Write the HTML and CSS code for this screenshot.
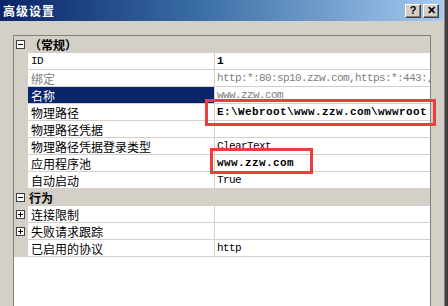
FILE: index.html
```html
<!DOCTYPE html>
<html>
<head>
    <meta charset="utf-8">
    <title>高级设置</title>
    <link rel="stylesheet" href="styles.css">
</head>
<body>
<div class="window">
    <div class="titlebar">
        <span class="title">高级设置</span>
        <div class="title-buttons">
            <span class="tbtn">?</span>
            <span class="tbtn">&#x2715;</span>
        </div>
    </div>

    <div class="content">
        <div class="grid">
            <div class="row cat">
                <span class="gutter"><i class="toggle minus"></i></span>
                <span class="cat-name">（常规）</span>
            </div>
            <div class="row">
                <span class="gutter"></span>
                <span class="name mono">ID</span>
                <span class="value bold">1</span>
            </div>
            <div class="row">
                <span class="gutter"></span>
                <span class="name grey">绑定</span>
                <span class="value grey">http:*:80:sp10.zzw.com,https:*:443:,</span>
            </div>
            <div class="row">
                <span class="gutter"></span>
                <span class="name selected">名称</span>
                <span class="value grey">www.zzw.com</span>
            </div>
            <div class="row">
                <span class="gutter"></span>
                <span class="name">物理路径</span>
                <span class="value bold">E:\Webroot\www.zzw.com\wwwroot</span>
            </div>
            <div class="row">
                <span class="gutter"></span>
                <span class="name">物理路径凭据</span>
                <span class="value"></span>
            </div>
            <div class="row">
                <span class="gutter"></span>
                <span class="name">物理路径凭据登录类型</span>
                <span class="value">ClearText</span>
            </div>
            <div class="row">
                <span class="gutter"></span>
                <span class="name">应用程序池</span>
                <span class="value bold">www.zzw.com</span>
            </div>
            <div class="row">
                <span class="gutter"></span>
                <span class="name">自动启动</span>
                <span class="value">True</span>
            </div>
            <div class="row cat">
                <span class="gutter"><i class="toggle minus"></i></span>
                <span class="cat-name">行为</span>
            </div>
            <div class="row">
                <span class="gutter"><i class="toggle plus"></i></span>
                <span class="name">连接限制</span>
                <span class="value"></span>
            </div>
            <div class="row">
                <span class="gutter"><i class="toggle plus"></i></span>
                <span class="name">失败请求跟踪</span>
                <span class="value"></span>
            </div>
            <div class="row">
                <span class="gutter"></span>
                <span class="name">已启用的协议</span>
                <span class="value">http</span>
            </div>
        </div>
    </div>

    <div class="mark mark-path"></div>
    <div class="mark mark-pool"></div>
</div>
</body>
</html>
```

FILE: styles.css
```css
body {
    margin: 0;
    font-family: "Noto Sans CJK SC", sans-serif;
    font-size: 12px;
    color: #000;
}

.window {
    position: relative;
    box-sizing: border-box;
    width: 448px;
    height: 306px;
    overflow: hidden;
    display: flex;
    flex-direction: column;
    background-color: #d4d0c8;
    border-right: 3px solid #404040;
    box-shadow: inset -1px 0 0 #808080;
}

.titlebar {
    height: 21px;
    margin-right: 2px;
    padding: 0 4px 0 3px;
    display: flex;
    align-items: center;
    justify-content: space-between;
    background: linear-gradient(to right, #0a246a, #3a6ea5 45%, #a6caf0);
}

.titlebar .title {
    color: #fff;
    font-weight: bold;
    font-size: 12px;
    letter-spacing: 1px;
}

.title-buttons {
    display: flex;
    gap: 2px;
}

.tbtn {
    box-sizing: border-box;
    width: 16px;
    height: 14px;
    display: flex;
    align-items: center;
    justify-content: center;
    background-color: #d4d0c8;
    border: 1px solid;
    border-color: #fff #404040 #404040 #fff;
    box-shadow: inset -1px -1px 0 #808080;
    font-family: "Liberation Sans", sans-serif;
    font-weight: bold;
    font-size: 11px;
    line-height: 1;
}

.content {
    flex: 1;
    display: flex;
    padding: 14px 14px 0 13px;
}

.grid {
    flex: 1;
    background-color: #fff;
    border: 1px solid #808080;
    border-bottom: none;
}

.row {
    display: grid;
    grid-template-columns: 14px 187px 215px;
    height: 17px;
}

.row > span {
    box-sizing: border-box;
    height: 17px;
    display: flex;
    align-items: center;
    white-space: nowrap;
    overflow: hidden;
    border-bottom: 1px solid #d4d0c8;
}

.gutter {
    background-color: #d4d0c8;
}

.name {
    padding-left: 3px;
    border-right: 1px solid #d4d0c8;
}

.value {
    padding-left: 2px;
    font-family: "Liberation Mono", monospace;
    font-size: 11px;
    letter-spacing: -0.6px;
}

.value.bold {
    font-weight: bold;
    letter-spacing: 0.4px;
}

.mono {
    font-family: "Liberation Mono", monospace;
    font-size: 11px;
    letter-spacing: -0.6px;
}

.grey {
    color: #808080;
}

.name.selected {
    background-color: #0a246a;
    color: #fff;
}

.row.cat {
    background-color: #d4d0c8;
}

.cat-name {
    grid-column: 2 / 4;
    padding-left: 1px;
    font-weight: bold;
}

.toggle {
    position: relative;
    box-sizing: border-box;
    width: 9px;
    height: 9px;
    margin-left: 2px;
    border: 1px solid #404040;
    background-color: #fff;
}

.toggle::before,
.toggle.plus::after {
    content: "";
    position: absolute;
    background-color: #000;
}

.toggle::before {
    left: 1px;
    top: 3px;
    width: 5px;
    height: 1px;
}

.toggle.plus::after {
    left: 3px;
    top: 1px;
    width: 1px;
    height: 5px;
}

.mark {
    position: absolute;
    box-sizing: border-box;
    border: 3px solid #ee3d3d;
}

.mark-path {
    left: 205px;
    top: 99px;
    width: 231px;
    height: 27px;
}

.mark-pool {
    left: 210px;
    top: 148px;
    width: 103px;
    height: 26px;
}
```
